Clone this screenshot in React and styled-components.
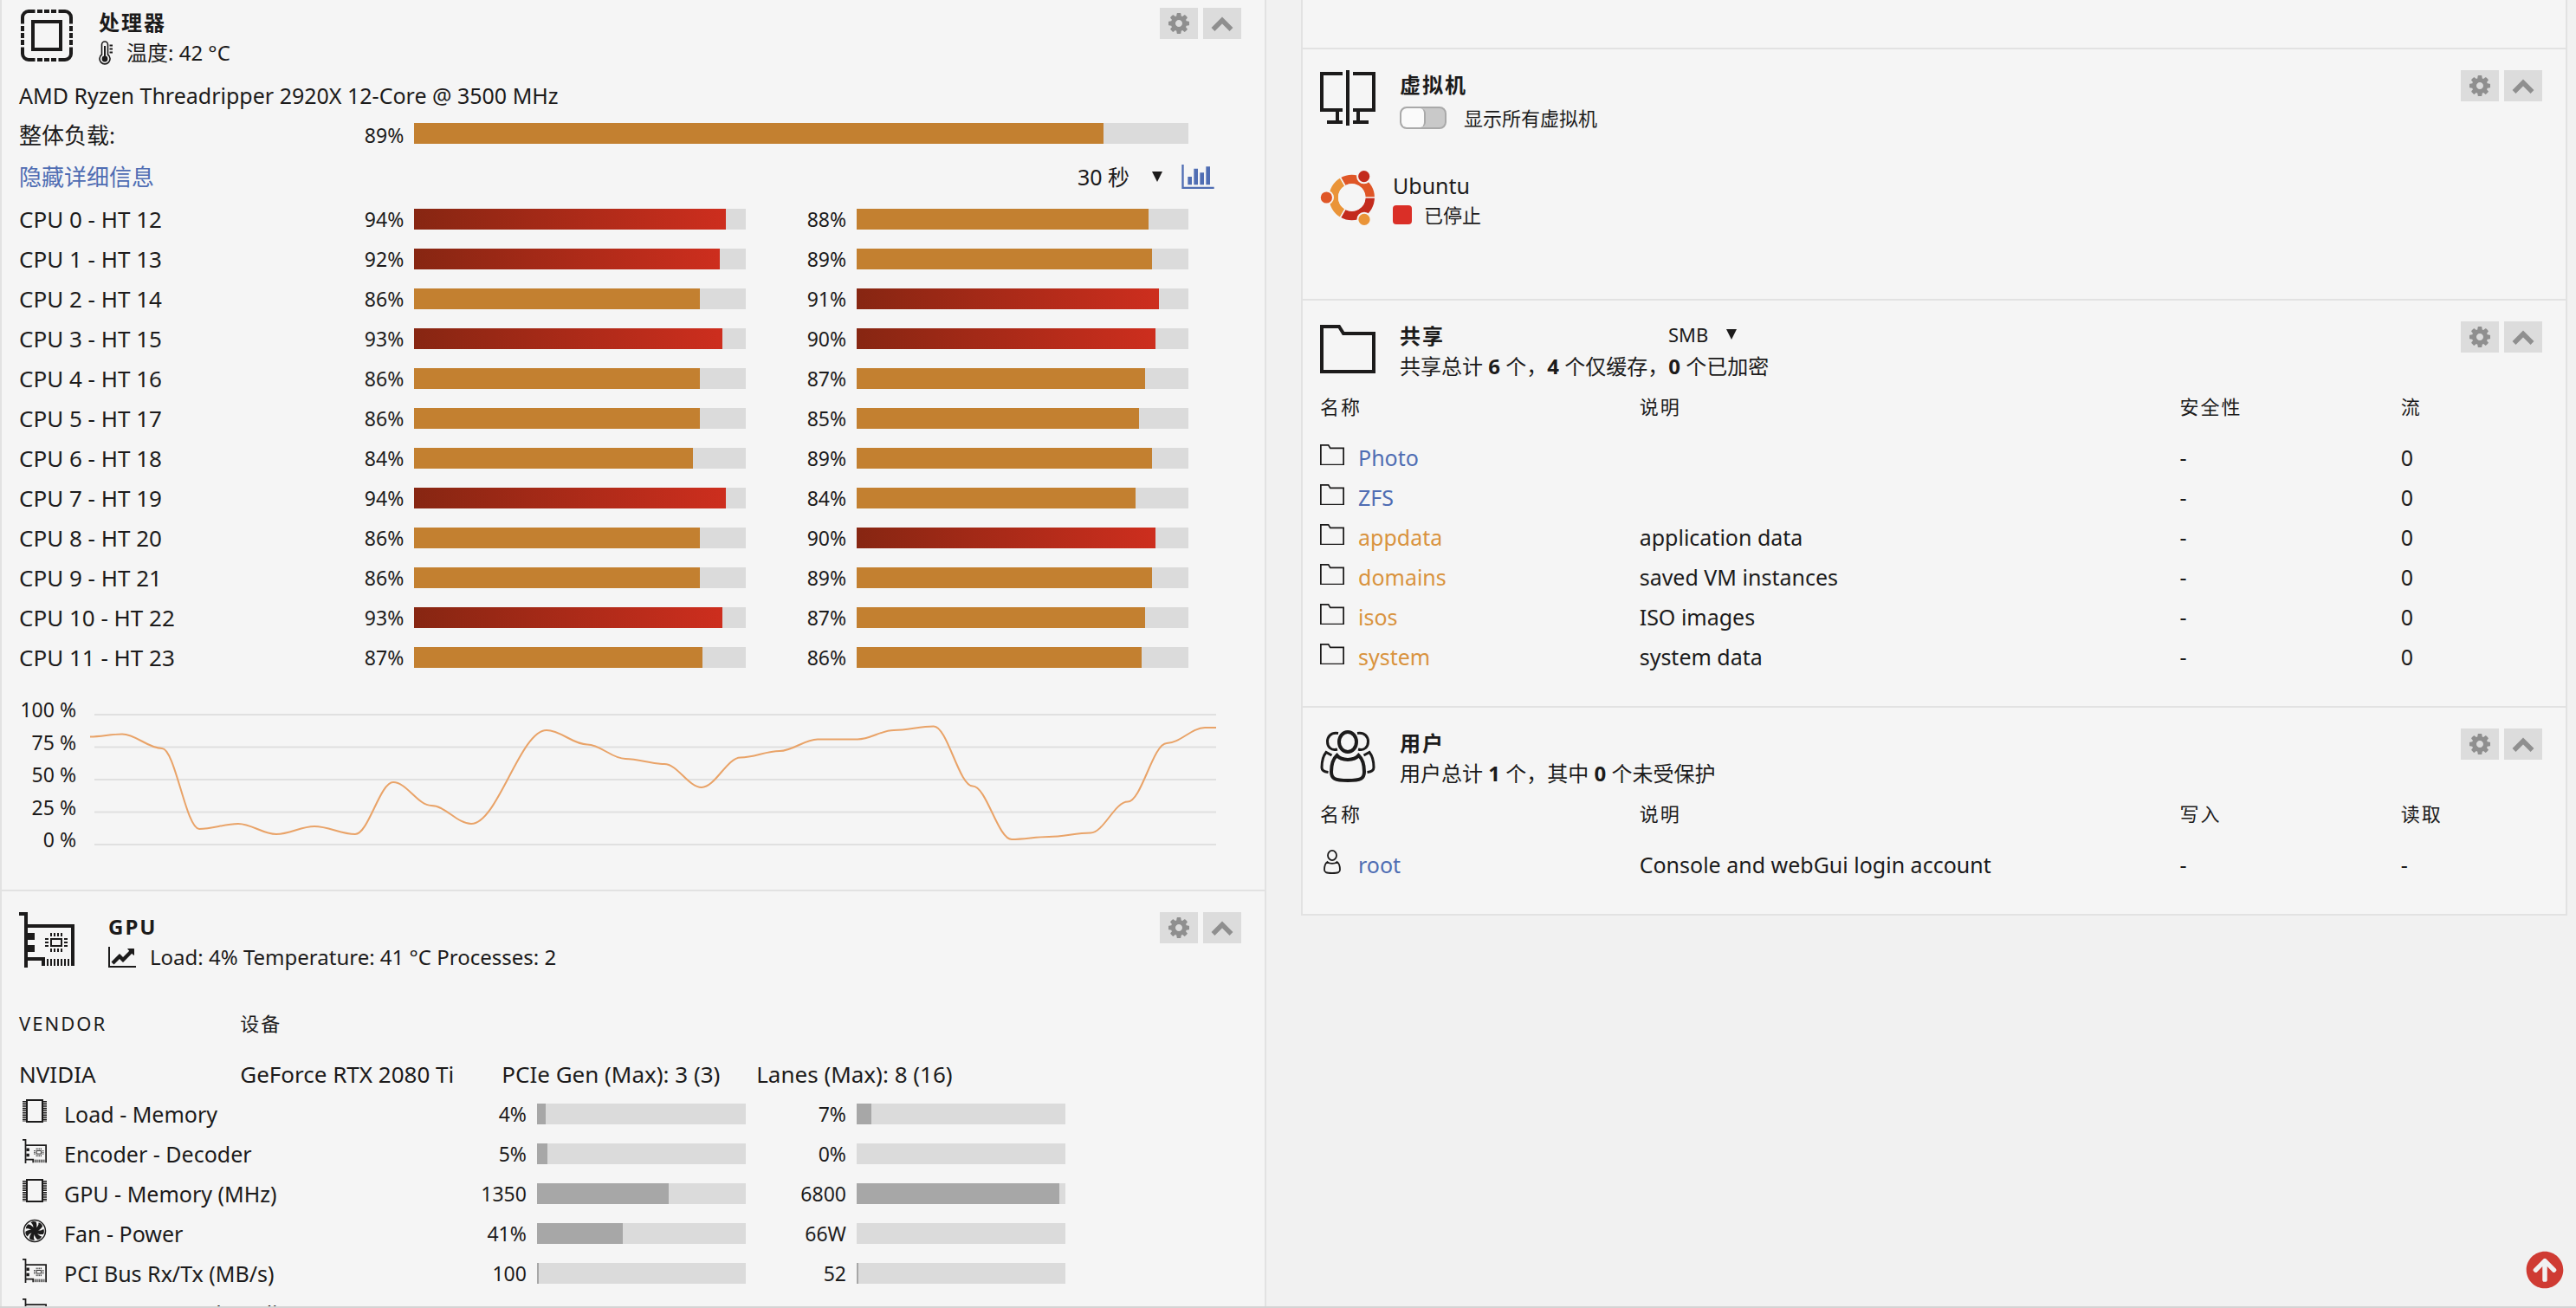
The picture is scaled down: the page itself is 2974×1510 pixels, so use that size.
import React from "react"
import styled, { createGlobalStyle, css } from "styled-components"
import { FaArrowCircleUp } from "react-icons/fa"

const cores = [
  ["CPU 0 - HT 12", 94, 88],
  ["CPU 1 - HT 13", 92, 89],
  ["CPU 2 - HT 14", 86, 91],
  ["CPU 3 - HT 15", 93, 90],
  ["CPU 4 - HT 16", 86, 87],
  ["CPU 5 - HT 17", 86, 85],
  ["CPU 6 - HT 18", 84, 89],
  ["CPU 7 - HT 19", 94, 84],
  ["CPU 8 - HT 20", 86, 90],
  ["CPU 9 - HT 21", 86, 89],
  ["CPU 10 - HT 22", 93, 87],
  ["CPU 11 - HT 23", 87, 86],
]

// [x, load %]
const history = [
  [0, 83], [37, 85], [83, 74], [126, 12], [171, 16], [215, 8], [259, 14],
  [306, 8], [350, 48], [394, 30], [440, 16], [527, 88], [574, 77], [618, 66],
  [663, 62], [706, 44], [751, 67], [796, 72], [840, 81], [886, 81], [928, 88],
  [974, 91], [1019, 45], [1064, 4], [1107, 6], [1155, 9], [1198, 33],
  [1243, 78], [1287, 90], [1300, 90],
]

const gpuRows = [
  { icon: "memory", label: "Load - Memory", a: "4%", aw: 4, b: "7%", bw: 7 },
  { icon: "card", label: "Encoder - Decoder", a: "5%", aw: 5, b: "0%", bw: 0 },
  { icon: "memory", label: "GPU - Memory (MHz)", a: "1350", aw: 63, b: "6800", bw: 97 },
  { icon: "fan", label: "Fan - Power", a: "41%", aw: 41, b: "66W", bw: 0 },
  { icon: "card", label: "PCI Bus Rx/Tx (MB/s)", a: "100", aw: 1, b: "52", bw: 1 },
]

const shares = [
  ["Photo", "", false],
  ["ZFS", "", false],
  ["appdata", "application data", true],
  ["domains", "saved VM instances", true],
  ["isos", "ISO images", true],
  ["system", "system data", true],
]

// ICONS
const CpuIcon = () => (
  <svg width="64" height="60" viewBox="-2 0 64 60" fill="none" stroke="#1c1b1b" strokeWidth="4">
    <path d="M2 16.500V9a7 7 0 0 1 7-7h7.500M43.500 2H51a7 7 0 0 1 7 7v7.500M58 43.500V51a7 7 0 0 1-7 7h-7.500M16.500 58H9a7 7 0 0 1-7-7v-7.500" />
    <path d="M19 2h6M27 2h6M35 2h6M19 58h6M27 58h6M35 58h6M2 19v6M2 27v6M2 35v6M58 19v6M58 27v6M58 35v6" />
    <rect x="14" y="14" width="32" height="32" />
  </svg>
)

const VmIcon = () => (
  <svg width="64" height="64" viewBox="0 0 64 64" fill="none" stroke="#1c1b1b" strokeWidth="4">
    <path d="M26 4H2v42h24M38 4h24v42H38M20 46v14M44 46v14M8 60h18M38 60h18M32 0v64" />
  </svg>
)

const FolderIcon = ({ size = 64 }) => (
  <svg width={size} height={(size * 56) / 64} viewBox="0 0 64 56" fill="none" stroke="#1c1b1b" strokeWidth="4">
    <path d="M2 2h20l5 8h35v44H2z" />
  </svg>
)

const UsersIcon = () => (
  <svg width="64" height="60" viewBox="0 0 64 60" fill="none" stroke="#1c1b1b" strokeWidth="3">
    <path d="M21 3.500C12 2 8.500 8 8.500 13c0 6 4 11 11.500 9M43 3.500C52 2 55.500 8 55.500 13c0 6-4 11-11.500 9" />
    <path d="M13.500 29 7 25.500C2.500 31 2 37 2 43c0 4 3 5 7.500 5.500M50.500 29l6.500-3.500c4.500 5.500 5 11.500 5 17.500 0 4-3 5-7.500 5.500" />
    <ellipse cx="32" cy="13.500" rx="10" ry="11.500" strokeWidth="4" />
    <path
      strokeWidth="4"
      d="M19.500 29C14 34 13 41 13 48c0 8 4 10 19 10s19-2 19-10c0-7-1-14-6.500-19-5 6.500-20 6.500-25 0z"
    />
  </svg>
)

const UserIcon = () => (
  <svg width="28" height="28" viewBox="0 0 28 28" fill="none" stroke="#1c1b1b" strokeWidth="1.800">
    <ellipse cx="14" cy="6.500" rx="5" ry="5.600" />
    <path d="M8.500 14C5.500 16 5 20 5 23c0 3 2 4 9 4s9-1 9-4c0-3-.5-7-3.500-9-2.500 2.600-8.500 2.600-11 0z" />
  </svg>
)

const CardIcon = ({ size = 64 }) => (
  <svg width={size} height={size} viewBox="0 0 64 64" fill="none" stroke="#1c1b1b">
    <path strokeWidth="4" d="M0 2h8v62M10 16h52v46M8 54h20v8" />
    <path strokeWidth="8" d="M14 24v8M14 38v8" />
    <path strokeWidth="2" d="M33 54v8M37 54v8M41 54v8M45 54v8M49 54v8M53 54v8M57 54v8" />
    <path
      strokeWidth="2"
      d="M37 24v4M41 24v4M45 24v4M49 24v4M37 42v4M41 42v4M45 42v4M49 42v4M30 31h4M30 35h4M30 39h4M52 31h4M52 35h4M52 39h4"
    />
    <rect x="37" y="31" width="12" height="8" strokeWidth="2" />
  </svg>
)

const MemoryIcon = () => (
  <svg width="28" height="28" viewBox="0 0 28 28" fill="none" stroke="#1c1b1b" strokeWidth="2">
    <rect x="5" y="1" width="18" height="25" />
    <path strokeWidth="4" strokeDasharray="1.600 1" d="M2 2v24M26 2v24" />
  </svg>
)

const FanIcon = () => (
  <svg width="28" height="28" viewBox="0 0 28 28" fill="#1c1b1b">
    <circle cx="14" cy="14" r="12.500" fill="none" stroke="#1c1b1b" strokeWidth="1.500" />
    <circle cx="14" cy="14" r="4" />
    {[0, 51, 103, 154, 206, 257, 309].map(deg => (
      <path key={deg} transform={`rotate(${deg} 14 14)`} d="M12.200 13C13 9 12 6 9.500 4.600 11.500 2.800 14 2.800 15.600 3.600 17 7 16.500 10 15.500 13z" />
    ))}
  </svg>
)

const ThermometerIcon = () => (
  <svg width="16" height="28" viewBox="0 0 16 28" fill="none" stroke="#1c1b1b" strokeWidth="1.600">
    <path d="M3.500 16V4.500a3.500 3.500 0 0 1 7 0V16a6 6 0 1 1-7 0z" />
    <path strokeWidth="2" d="M7 6v14M12.500 5.500H16M12.500 9.500H16M12.500 13.500H16" />
    <circle cx="7" cy="21" r="2.600" fill="#1c1b1b" />
  </svg>
)

const LineChartIcon = () => (
  <svg width="32" height="24" viewBox="0 0 2048 1536" fill="#1c1b1b">
    <path d="M2048 1408v128H0V0h128v1408h1920zM1920 160v435q0 21-19.500 29.500T1865 617l-121-121-633 633q-10 10-23 10t-23-10l-233-233-416 416-192-192 585-585q10-10 23-10t23 10l233 233 464-464-121-121q-16-16-7.500-35.500T1453 128h435q14 0 23 9t9 23z" />
  </svg>
)

const BarChartIcon = () => (
  <svg width="38" height="28" viewBox="0 0 2048 1536" fill="currentColor">
    <path d="M640 768v512H384V768h256zM1024 256v1024H768V256h256zM2048 1408v128H0V0h128v1408h1920zM1408 512v768h-256V512h256zM1792 128v1152h-256V128h256z" />
  </svg>
)

const CogIcon = () => (
  <svg width="24" height="24" viewBox="0 128 1536 1536" fill="currentColor">
    <path d="M1024 896q0-106-75-181t-181-75-181 75-75 181 75 181 181 75 181-75 75-181zm512-109v222q0 12-8 23t-20 13l-185 28q-19 54-39 91 35 50 107 138 10 12 10 25t-9 23q-27 37-99 108t-94 71q-12 0-26-9l-138-108q-44 23-91 38-16 136-29 186-7 28-36 28H657q-14 0-24.500-8.500T621 1634l-28-184q-49-16-90-37l-141 107q-10 9-25 9-14 0-25-11-126-114-165-168-7-10-7-23 0-12 8-23 15-21 51-66.500t54-70.500q-27-50-41-99l-183-27q-13-2-21-12.500T0 1007V785q0-12 8-23t19-13l186-28q14-46 39-92-40-57-107-138-10-12-10-24 0-10 9-23 26-36 98.500-107.500T337 265q13 0 26 10l138 107q44-23 91-38 16-136 29-186 7-28 36-28h222q14 0 24.500 8.500T915 160l28 184q49 16 90 37l142-107q9-9 24-9 13 0 25 10 129 119 165 170 7 8 7 22 0 12-8 23-15 21-51 66.500t-54 70.500q26 50 41 98l183 28q13 2 21 12.500t8 23.500z" />
  </svg>
)

const ChevronIcon = () => (
  <svg width="26" height="20" viewBox="0 0 26 20" fill="none" stroke="currentColor" strokeWidth="5.500">
    <path d="M2.500 17 13 6.500 23.500 17" />
  </svg>
)

const UbuntuLogo = () => (
  <svg width="64" height="64" viewBox="0 0 64 64" fill="none">
    <g strokeWidth="10.500">
      <path stroke="#ea9438" d="M26.200 49.200a21 21 0 0 1 0-36.400" />
      <path stroke="#df5627" d="M26.200 12.800A21 21 0 0 1 57.700 31" />
      <path stroke="#c32b1d" d="M57.700 31a21 21 0 0 1-31.500 18.200" />
    </g>
    <path stroke="#f5f5f5" strokeWidth="1.600" d="M36.700 31H64M36.700 31 21.700 5M36.700 31l-15 26" />
    <circle cx="36.700" cy="31" r="15.700" fill="#f5f5f5" />
    <g stroke="#f5f5f5" strokeWidth="2">
      <circle cx="7.400" cy="31" r="7.600" fill="#df5627" />
      <circle cx="50.700" cy="6.600" r="7.600" fill="#c32b1d" />
      <circle cx="51" cy="56.400" r="7.600" fill="#ea9438" />
    </g>
  </svg>
)

const rowIcons = {
  memory: <MemoryIcon />,
  card: <CardIcon size={28} />,
  fan: <FanIcon />,
}

// COMPONENTS
const Meter = ({ value, plain }) => (
  <Track>
    <Fill $tone={plain ? "plain" : value >= 90 ? "hot" : "warm"} style={{ width: `${value}%` }} />
  </Track>
)

const Controls = () => (
  <ControlGroup>
    <SquareButton type="button" aria-label="设置">
      <CogIcon />
    </SquareButton>
    <SquareButton type="button" aria-label="折叠">
      <ChevronIcon />
    </SquareButton>
  </ControlGroup>
)

const Picker = ({ label, value, width, small }) => (
  <PickerWrap $width={width}>
    <PickerSelect aria-label={label} defaultValue={value} $small={small}>
      <option>{value}</option>
    </PickerSelect>
    <svg width="12" height="12" viewBox="0 0 12 12" fill="#1c1b1b">
      <path d="M0 0h12L6 12z" />
    </svg>
  </PickerWrap>
)

const Header = ({ icon, title, extra, wide, tall, children }) => (
  <HeaderRow>
    <IconBox $wide={wide}>{icon}</IconBox>
    <HeaderText>
      <TitleRow>
        <Title>{title}</Title>
        {extra}
      </TitleRow>
      <Subtitle $tall={tall}>{children}</Subtitle>
    </HeaderText>
    <Controls />
  </HeaderRow>
)

const LoadChart = () => {
  const y = v => 169 - v * 1.5
  const d = history
    .map(([x, v], i) => {
      if (i === 0) return `M${x} ${y(v)}`
      const [px, pv] = history[i - 1]
      const ease = (x - px) * 0.35
      return `C${px + ease} ${y(pv)} ${x - ease} ${y(v)} ${x} ${y(v)}`
    })
    .join("")
  return (
    <ChartRow>
      <ChartScale>
        {[100, 75, 50, 25, 0].map(v => (
          <span key={v}>{v} %</span>
        ))}
      </ChartScale>
      <ChartPlot viewBox="0 0 1300 180" preserveAspectRatio="none" fill="none">
        {[100, 75, 50, 25, 0].map(v => (
          <line key={v} x1="5" x2="1300" y1={y(v)} y2={y(v)} stroke="#e0e0e0" strokeWidth="2" />
        ))}
        <path d={d} stroke="#e9a368" strokeWidth="2" vectorEffect="non-scaling-stroke" />
      </ChartPlot>
    </ChartRow>
  )
}

const App = () => (
  <>
    <GlobalStyle />
    <Page>
      <Column $fill>
        <Section $first>
          <Header icon={<CpuIcon />} title="处理器">
            <ThermometerIcon />
            <span>温度: 42 °C</span>
          </Header>
          <Line>AMD Ryzen Threadripper 2920X 12-Core @ 3500 MHz</Line>
          <OverallRow>
            <span>整体负载:</span>
            <Value>89%</Value>
            <Meter value={89} />
          </OverallRow>
          <ToolRow>
            <TextLink href="#details">隐藏详细信息</TextLink>
            <Tools>
              <Picker label="时间范围" value="30 秒" width={98} />
              <ChartButton type="button" aria-label="图表">
                <BarChartIcon />
              </ChartButton>
            </Tools>
          </ToolRow>
          {cores.map(([name, a, b]) => (
            <CoreRow key={name}>
              <span>{name}</span>
              <Value>{a}%</Value>
              <Meter value={a} />
              <Value>{b}%</Value>
              <Meter value={b} />
            </CoreRow>
          ))}
          <LoadChart />
        </Section>

        <Section>
          <Header icon={<CardIcon />} title="GPU" wide>
            <LineChartIcon />
            <span>Load: 4% Temperature: 41 °C Processes: 2</span>
          </Header>
          <GpuTable>
            <thead>
              <tr>
                <th>VENDOR</th>
                <th>设备</th>
                <th />
                <th />
              </tr>
            </thead>
            <tbody>
              <tr>
                <td>NVIDIA</td>
                <td>GeForce RTX 2080 Ti</td>
                <td>PCIe Gen (Max): 3 (3)</td>
                <td>Lanes (Max): 8 (16)</td>
              </tr>
            </tbody>
          </GpuTable>
          {gpuRows.map(row => (
            <GpuRow key={row.label}>
              <IconLabel>
                {rowIcons[row.icon]}
                {row.label}
              </IconLabel>
              <Value>{row.a}</Value>
              <Meter value={row.aw} plain />
              <Value>{row.b}</Value>
              <Meter value={row.bw} plain />
            </GpuRow>
          ))}
          <GpuRow>
            <IconLabel>
              {rowIcons.card}
              Power State - Throttling
            </IconLabel>
            <Value>P8</Value>
            <StateValue>No</StateValue>
          </GpuRow>
        </Section>
      </Column>

      <Column>
        <Spacer />
        <Section>
          <Header icon={<VmIcon />} title="虚拟机" tall>
            <Toggle type="checkbox" id="all-vms" />
            <ToggleLabel htmlFor="all-vms">显示所有虚拟机</ToggleLabel>
          </Header>
          <VmItem>
            <UbuntuLogo />
            <div>
              <VmName>Ubuntu</VmName>
              <VmState>
                <StopMark />
                已停止
              </VmState>
            </div>
          </VmItem>
        </Section>

        <Section>
          <Header icon={<FolderIcon />} title="共享" extra={<Picker label="协议" value="SMB" width={79} small />}>
            <span>
              共享总计 <b>6</b> 个，<b>4</b> 个仅缓存，<b>0</b> 个已加密
            </span>
          </Header>
          <Table>
            <thead>
              <tr>
                <th>名称</th>
                <th>说明</th>
                <th>安全性</th>
                <th>流</th>
              </tr>
            </thead>
            <tbody>
              {shares.map(([name, note, warn]) => (
                <tr key={name}>
                  <td>
                    <NameCell>
                      <FolderIcon size={28} />
                      <TextLink href={`#${name}`} $warn={warn}>
                        {name}
                      </TextLink>
                    </NameCell>
                  </td>
                  <td>{note}</td>
                  <td>-</td>
                  <td>0</td>
                </tr>
              ))}
            </tbody>
          </Table>
        </Section>

        <Section>
          <Header icon={<UsersIcon />} title="用户">
            <span>
              用户总计 <b>1</b> 个，其中 <b>0</b> 个未受保护
            </span>
          </Header>
          <Table>
            <thead>
              <tr>
                <th>名称</th>
                <th>说明</th>
                <th>写入</th>
                <th>读取</th>
              </tr>
            </thead>
            <tbody>
              <tr>
                <td>
                  <NameCell>
                    <UserIcon />
                    <TextLink href="#root">root</TextLink>
                  </NameCell>
                </td>
                <td>Console and webGui login account</td>
                <td>-</td>
                <td>-</td>
              </tr>
            </tbody>
          </Table>
        </Section>
      </Column>
    </Page>
    <BackToTop href="#top" aria-label="返回顶部">
      <FaArrowCircleUp />
    </BackToTop>
    <BottomLine />
  </>
)

export default App

// STYLES
const GlobalStyle = createGlobalStyle`
  * {
    box-sizing: border-box;
  }
  body {
    margin: 0;
    background: #f1f1f1;
    color: #1c1b1b;
    font-family: "Noto Sans", "Noto Sans CJK SC", sans-serif;
    font-size: 25px;
    line-height: 46px;
  }
  svg {
    display: block;
    flex-shrink: 0;
  }
`

const Page = styled.main`
  display: grid;
  grid-template-columns: 1fr 1fr;
  column-gap: 40px;
  align-items: start;
  height: 100vh;
  padding-right: 10px;
  overflow: hidden;
`

const Column = styled.div`
  min-width: 0;
  min-height: ${p => (p.$fill ? "100vh" : "0")};
  background: #f5f5f5;
  border: 2px solid #e2e2e2;
  border-top: 0;
`

const Section = styled.section`
  padding: 24px 20px 34px;
  border-bottom: 2px solid #e2e2e2;
  &:last-child {
    border-bottom: 0;
  }
  ${p => p.$first && css`
    padding-top: 9px;
    padding-bottom: 41px;
  `}
`

const Spacer = styled.div`
  height: 57px;
  border-bottom: 2px solid #e2e2e2;
`

const HeaderRow = styled.header`
  display: flex;
  align-items: flex-start;
  min-height: 76px;
`

const IconBox = styled.div`
  display: flex;
  align-items: center;
  flex-shrink: 0;
  width: ${p => (p.$wide ? 103 : 92)}px;
  height: 64px;
`

const HeaderText = styled.div`
  flex: 1;
`

const TitleRow = styled.div`
  display: flex;
  align-items: flex-start;
  height: 34px;
`

const Title = styled.h2`
  width: 310px;
  margin: 0;
  font-size: 24px;
  line-height: 34px;
  font-weight: 700;
  letter-spacing: 2px;
`

const Subtitle = styled.div`
  display: flex;
  align-items: center;
  gap: 16px;
  height: ${p => (p.$tall ? 42 : 36)}px;
  font-size: 24px;
  line-height: 36px;
`

const ControlGroup = styled.div`
  display: flex;
  gap: 6px;
  padding-right: 7px;
`

const SquareButton = styled.button`
  display: flex;
  align-items: center;
  justify-content: center;
  width: 44px;
  height: 36px;
  padding: 0;
  border: 0;
  background: #dcdcdc;
  color: #8f8f8f;
`

const PickerWrap = styled.div`
  display: inline-grid;
  align-items: center;
  justify-items: end;
  width: ${p => p.$width}px;
  > * {
    grid-area: 1 / 1;
  }
  svg {
    pointer-events: none;
  }
`

const PickerSelect = styled.select`
  appearance: none;
  width: 100%;
  height: ${p => (p.$small ? 30 : 36)}px;
  padding: 0;
  border: 0;
  background: transparent;
  color: inherit;
  font: inherit;
  font-size: ${p => (p.$small ? 22 : 25)}px;
  line-height: 30px;
`

const Line = styled.div`
  height: 46px;
  padding-top: 2px;
`

const bars = css`
  display: grid;
  grid-template-rows: 46px;
  align-items: center;
`

const CoreRow = styled.div`
  ${bars}
  grid-template-columns: 1fr 110px 27% 128px 27% 68px;
  font-size: 26px;
`

const OverallRow = styled(CoreRow)`
  > span {
    padding-top: 4px;
  }
  > :last-child {
    grid-column: 3 / 6;
  }
`

const GpuRow = styled.div`
  ${bars}
  grid-template-columns: 1fr 110px 17% 128px 17% 210px;
`

const Value = styled.span`
  padding-right: 12px;
  font-size: 23px;
  text-align: right;
`

const StateValue = styled(Value)`
  padding: 0 0 0 36px;
  text-align: left;
`

const Track = styled.div`
  height: 24px;
  background: #dbdbdb;
`

const tones = {
  warm: "#c38030",
  hot: "linear-gradient(90deg, #872612, #cd2e1e)",
  plain: "#a7a7a7",
}

const Fill = styled.div`
  height: 100%;
  background: ${p => tones[p.$tone]};
`

const TextLink = styled.a`
  color: ${p => (p.$warn ? "#d9933e" : "#4f6db3")};
  text-decoration: none;
`

const ToolRow = styled.div`
  display: flex;
  align-items: center;
  justify-content: space-between;
  height: 53px;
  padding-right: 38px;
  font-size: 26px;
`

const Tools = styled.div`
  display: flex;
  align-items: center;
  gap: 22px;
`

const ChartButton = styled.button`
  padding: 0;
  border: 0;
  background: none;
  color: #4f6db3;
`

const ChartRow = styled.div`
  display: flex;
  gap: 16px;
  margin-top: 22px;
  padding-right: 36px;
`

const ChartScale = styled.div`
  display: flex;
  flex-direction: column;
  justify-content: space-between;
  width: 66px;
  height: 180px;
  font-size: 23px;
  line-height: 30px;
  text-align: right;
  white-space: nowrap;
`

const ChartPlot = styled.svg`
  flex: 1;
  min-width: 0;
  height: 180px;
  margin-top: 2px;
`

const Table = styled.table`
  width: 100%;
  table-layout: fixed;
  border-collapse: collapse;
  th,
  td {
    height: 46px;
    padding: 0;
    text-align: left;
  }
  th {
    height: 58px;
    padding-bottom: 14px;
    font-size: 22px;
    font-weight: 400;
    line-height: 44px;
    letter-spacing: 2px;
  }
  th:nth-child(1) {
    width: 26%;
  }
  th:nth-child(2) {
    width: 44%;
  }
  th:nth-child(3) {
    width: 18%;
  }
`

const GpuTable = styled(Table)`
  margin-top: 30px;
  font-size: 26px;
  th:nth-child(1) {
    width: 18%;
  }
  th:nth-child(2) {
    width: 302px;
  }
  th:nth-child(3) {
    width: 294px;
  }
`

const NameCell = styled.div`
  display: flex;
  align-items: center;
  gap: 16px;
  svg {
    margin-bottom: 6px;
  }
`

const IconLabel = styled.div`
  display: flex;
  align-items: center;
  gap: 20px;
  padding-left: 4px;
  white-space: nowrap;
  svg {
    margin-bottom: 6px;
  }
`

const VmItem = styled.div`
  display: flex;
  gap: 20px;
  padding: 40px 0 46px;
`

const VmName = styled.div`
  line-height: 34px;
`

const VmState = styled.div`
  display: flex;
  align-items: center;
  gap: 14px;
  font-size: 22px;
  line-height: 34px;
`

const StopMark = styled.i`
  width: 22px;
  height: 22px;
  border-radius: 4px;
  background: #da2f27;
`

const Toggle = styled.input`
  appearance: none;
  width: 54px;
  height: 26px;
  margin: 0;
  border: 2px solid #a9a9a9;
  border-radius: 8px;
  background: #c9c9c9;
  overflow: hidden;
  &::before {
    content: "";
    display: block;
    width: 26px;
    height: 22px;
    border-right: 2px solid #a9a9a9;
    border-radius: 6px;
    background: #fafafa;
  }
`

const ToggleLabel = styled.label`
  padding-left: 4px;
  font-size: 22px;
`

const BackToTop = styled.a`
  position: fixed;
  right: 14px;
  bottom: 22px;
  color: #cf3b33;
  font-size: 44px;
  line-height: 0;
`

const BottomLine = styled.div`
  position: fixed;
  right: 0;
  bottom: 0;
  left: 0;
  height: 2px;
  background: #d4d4d4;
`
